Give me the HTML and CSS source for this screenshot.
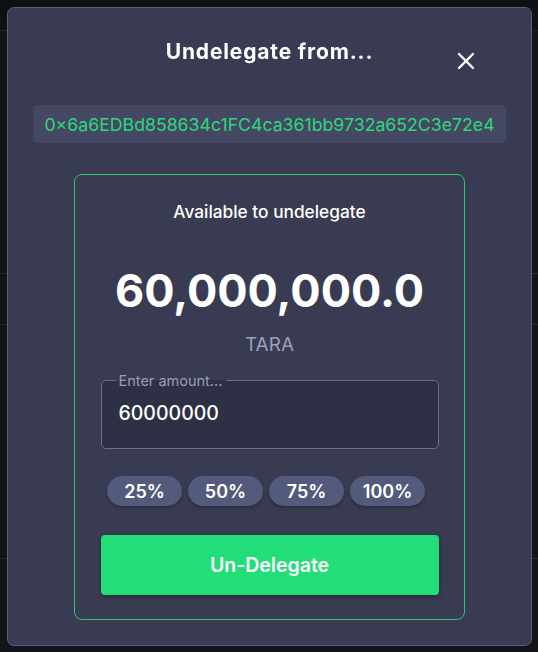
FILE: index.html
```html
<!DOCTYPE html>
<html lang="en">
<head>
<meta charset="utf-8">
<title>Undelegate</title>
<link rel="stylesheet" href="styles.css">
</head>
<body>
<div class="backdrop">
  <div class="bg-header"></div>
  <div class="bg-row bg-row-1"></div>
  <div class="bg-row bg-row-2"></div>
  <div class="bg-row bg-row-3"></div>
  <div class="bg-row bg-row-4"></div>
</div>

<div class="modal" role="dialog" aria-labelledby="modal-title">
  <header class="modal-header">
    <h2 id="modal-title" class="modal-title">Undelegate from...</h2>
    <button class="close-btn" aria-label="Close">
      <svg width="18" height="18" viewBox="0 0 18 18"><path d="M2 2 L16 16 M16 2 L2 16" stroke="#fff" stroke-width="2.4" stroke-linecap="round"/></svg>
    </button>
  </header>

  <div class="address">0×6a6EDBd858634c1FC4ca361bb9732a652C3e72e4</div>

  <section class="card">
    <p class="card-label">Available to undelegate</p>
    <p class="amount">60,000,000.0</p>
    <p class="unit">TARA</p>

    <fieldset class="field">
      <legend class="field-legend">Enter amount...</legend>
      <input class="field-input" type="text" value="60000000">
    </fieldset>

    <div class="pills">
      <button class="pill">25%</button>
      <button class="pill">50%</button>
      <button class="pill">75%</button>
      <button class="pill">100%</button>
    </div>

    <button class="submit">Un-Delegate</button>
  </section>
</div>
</body>
</html>
```

FILE: styles.css
```css
* { box-sizing: border-box; }

html, body {
  margin: 0;
  padding: 0;
}

body {
  background: #131419;
  font-family: Inter, "Noto Sans", sans-serif;
  color: #fff;
  width: 538px;
  height: 652px;
  overflow: hidden;
}

/* backdrop page behind the modal */
.backdrop {
  display: flex;
  flex-direction: column;
}
.bg-header {
  height: 31px;
  background: #0f1014;
  border-bottom: 1px solid #1f2028;
}
.bg-row {
  border-bottom: 1px solid #262830;
}
.bg-row-1 { height: 243px; }
.bg-row-2 { height: 51px; }
.bg-row-3 { height: 234px; }
.bg-row-4 { height: 90px; border-bottom: none; }

/* modal */
.modal {
  position: fixed;
  left: 7px;
  top: 7px;
  width: 525px;
  height: 639px;
  background: #383b51;
  border: 1px solid #5b5e74;
  border-radius: 7px;
  padding: 0 25px;
  display: flex;
  flex-direction: column;
  align-items: center;
}

.modal-header {
  position: relative;
  width: 100%;
  padding-top: 30px;
  display: flex;
  justify-content: center;
}

.modal-title {
  margin: 0;
  font-family: Inter, sans-serif;
  font-weight: 700;
  font-size: 21px;
  line-height: 28px;
  letter-spacing: 0.85px;
  color: #fff;
}

.close-btn {
  position: absolute;
  right: 31px;
  top: 44px;
  width: 18px;
  height: 18px;
  padding: 0;
  border: none;
  background: none;
  display: flex;
}

.address {
  margin-top: 39px;
  width: 100%;
  height: 38px;
  background: #454862;
  border-radius: 5px;
  display: flex;
  align-items: center;
  justify-content: center;
  color: #2ed67c;
  font-size: 17.7px;
  letter-spacing: 0;
}

.card {
  margin-top: 31px;
  width: 391px;
  height: 446px;
  border: 1px solid #27c873;
  border-radius: 8px;
  padding: 0 25px;
  display: flex;
  flex-direction: column;
  align-items: center;
}

.card p { margin: 0; }

.card-label {
  margin-top: 27px !important;
  font-size: 17.3px;
  font-weight: 500;
  line-height: 20px;
  color: #fff;
}

.amount {
  margin-top: 41px !important;
  font-size: 45px;
  font-weight: 700;
  line-height: 56px;
  color: #fff;
}

.unit {
  margin-top: 14px !important;
  font-size: 19px;
  line-height: 24px;
  color: #9c9fbf;
}

.field {
  margin: 15px 0 0;
  width: 338px;
  height: 77px;
  border: 1px solid #6c6f86;
  border-radius: 5px;
  background: #2e3146;
  padding: 0 14px;
  min-width: 0;
}

.field-legend {
  padding: 0 4px 0 3px;
  font-size: 14.5px;
  line-height: 17px;
  color: #9a9dbb;
}

.field-input {
  display: block;
  width: 100%;
  margin-top: 9px;
  border: none;
  background: transparent;
  outline: none;
  padding: 0 3px;
  height: 30px;
  font-family: Inter, sans-serif;
  font-size: 19.5px;
  font-weight: 500;
  color: #fff;
}

.pills {
  margin-top: 27px;
  width: 100%;
  padding-left: 7px;
  display: flex;
  gap: 6px;
}

.pill {
  width: 75px;
  height: 30px;
  border: none;
  border-radius: 15px;
  background: #535a7b;
  color: #fff;
  font-family: Inter, sans-serif;
  font-size: 18px;
  font-weight: 600;
  padding: 0;
  box-shadow: 0 2px 3px rgba(0,0,0,0.25);
}

.submit {
  margin-top: 29px;
  width: 338px;
  height: 60px;
  border: none;
  border-radius: 4px;
  background: #22de78;
  color: #fff;
  font-family: Inter, sans-serif;
  font-size: 19.5px;
  font-weight: 600;
  box-shadow: 0 2px 4px rgba(0,0,0,0.3);
}
```
